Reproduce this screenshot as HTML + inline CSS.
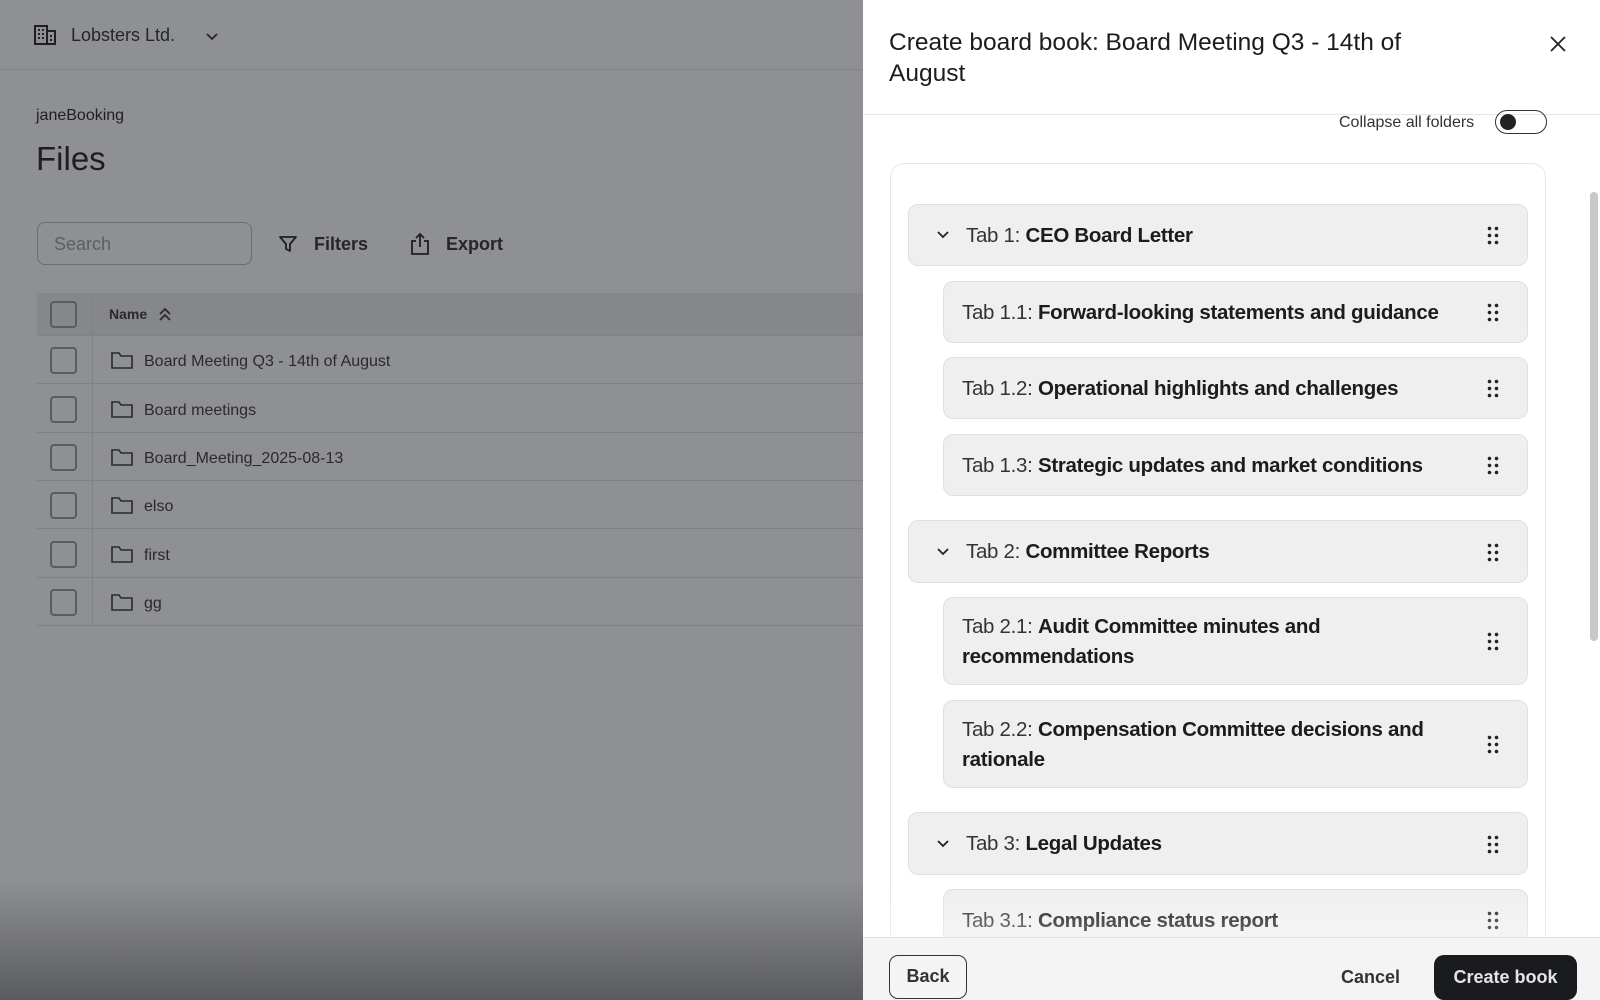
<!DOCTYPE html>
<html><head><meta charset="utf-8"><style>
*{box-sizing:border-box;margin:0;padding:0}
body{width:1600px;height:1000px;overflow:hidden;position:relative;font-family:"Liberation Sans",sans-serif;background:#8f9094;color:#1c1c1e}
.left{position:absolute;left:0;top:0;width:863px;height:1000px;background:#8f9094;color:#1f1f22}
.topbar{position:absolute;left:0;top:0;width:863px;height:70px;border-bottom:1px solid #838488}
.grad{position:absolute;left:0;top:880px;width:863px;height:120px;background:linear-gradient(#8f909400,#5a5b5e)}
.row{position:absolute;left:37px;width:826px;height:48px;border-bottom:1px solid #818286}
.cb{position:absolute;left:13px;top:11px;width:27px;height:27px;border:2px solid #5b5c60;border-radius:4px}
.rn{position:absolute;left:107px;top:17px;font-size:16px;color:#2a2a2d}
.fold{position:absolute;left:74px;top:15px}
.panel{position:absolute;left:863px;top:0;width:737px;height:1000px;background:#fff}
.item{position:absolute;background:#efeff0;border:1.5px solid #e0e0e2;border-radius:10px;font-size:20.5px;letter-spacing:-0.3px;color:#1c1c1e}
.item b{font-weight:600}
.item span{font-weight:400;color:#333}
.l1{left:45px;width:620px}
.l2{left:80px;width:585px}
.dots{position:absolute;right:27px;top:50%;margin-top:-10px;width:14px;height:21px;background:radial-gradient(circle,#222 1.6px,transparent 2px) 0 0/7px 7px}
.chev{position:absolute;left:27px;top:50%;margin-top:-5px}
</style></head><body>
<div class="left">
 <div class="topbar">
  <svg style="position:absolute;left:34px;top:25px" width="22" height="20" viewBox="0 0 22 20"><rect x="1" y="1" width="12" height="18" fill="none" stroke="#1f1f22" stroke-width="2"/><rect x="13" y="6" width="8" height="13" fill="none" stroke="#1f1f22" stroke-width="2"/><g fill="#1f1f22"><rect x="4" y="4" width="2" height="2"/><rect x="8" y="4" width="2" height="2"/><rect x="4" y="8" width="2" height="2"/><rect x="8" y="8" width="2" height="2"/><rect x="4" y="12" width="2" height="2"/><rect x="8" y="12" width="2" height="2"/><rect x="16" y="10" width="2" height="2"/><rect x="16" y="14" width="2" height="2"/></g></svg>
  <div style="position:absolute;left:71px;top:25px;font-size:18px;color:#26262a">Lobsters Ltd.</div>
  <svg style="position:absolute;left:205px;top:32px" width="14" height="9"><path d="M2 2l5 5 5-5" fill="none" stroke="#26262a" stroke-width="1.8"/></svg>
 </div>
 <div style="position:absolute;left:36px;top:107px;font-size:16px">janeBooking</div>
 <div style="position:absolute;left:36px;top:140px;font-size:33px;font-weight:500">Files</div>
 <div style="position:absolute;left:37px;top:222px;width:215px;height:43px;border:1.5px solid #6c6d71;border-radius:8px;font-size:18px;color:#5d5e62;padding:11px 16px">Search</div>
 <svg style="position:absolute;left:279px;top:235px" width="18" height="18"><path d="M1 2h16l-6 7v7l-4-2V9z" fill="none" stroke="#1f1f22" stroke-width="1.8" stroke-linejoin="round"/></svg>
 <div style="position:absolute;left:314px;top:234px;font-size:18px;font-weight:600;color:#26262a">Filters</div>
 <svg style="position:absolute;left:410px;top:232px" width="20" height="24"><path d="M6 9H2v13h16V9h-4M10 15V2M6 6l4-4 4 4" fill="none" stroke="#1f1f22" stroke-width="1.8"/></svg>
 <div style="position:absolute;left:446px;top:234px;font-size:18px;font-weight:600;color:#26262a">Export</div>
 <div style="position:absolute;left:37px;top:293px;width:826px;height:43px;background:#86878b;border-bottom:1px solid #818286"><div class="cb" style="top:8px"></div><div style="position:absolute;left:55px;top:0;width:1px;height:43px;background:#818286"></div><div style="position:absolute;left:72px;top:13px;font-size:14px;font-weight:600;color:#2a2a2d">Name</div><svg style="position:absolute;left:121px;top:13px" width="14" height="16"><path d="M2 8l5-5 5 5M2 14l5-5 5 5" fill="none" stroke="#2a2a2d" stroke-width="1.8"/></svg></div>
 <div class="row" style="top:336px"><div class="cb"></div><svg class="fold" width="22" height="18"><path d="M1 2h7l2 3h11v12H1z" fill="none" stroke="#2a2a2d" stroke-width="1.6"/></svg><div class="rn">Board Meeting Q3 - 14th of August</div></div>
 <div class="row" style="top:385px"><div class="cb"></div><svg class="fold" width="22" height="18"><path d="M1 2h7l2 3h11v12H1z" fill="none" stroke="#2a2a2d" stroke-width="1.6"/></svg><div class="rn">Board meetings</div></div>
 <div class="row" style="top:433px"><div class="cb"></div><svg class="fold" width="22" height="18"><path d="M1 2h7l2 3h11v12H1z" fill="none" stroke="#2a2a2d" stroke-width="1.6"/></svg><div class="rn">Board_Meeting_2025-08-13</div></div>
 <div class="row" style="top:481px"><div class="cb"></div><svg class="fold" width="22" height="18"><path d="M1 2h7l2 3h11v12H1z" fill="none" stroke="#2a2a2d" stroke-width="1.6"/></svg><div class="rn">elso</div></div>
 <div class="row" style="top:530px"><div class="cb"></div><svg class="fold" width="22" height="18"><path d="M1 2h7l2 3h11v12H1z" fill="none" stroke="#2a2a2d" stroke-width="1.6"/></svg><div class="rn">first</div></div>
 <div class="row" style="top:578px"><div class="cb"></div><svg class="fold" width="22" height="18"><path d="M1 2h7l2 3h11v12H1z" fill="none" stroke="#2a2a2d" stroke-width="1.6"/></svg><div class="rn">gg</div></div>
 <div style="position:absolute;left:92px;top:293px;width:1px;height:333px;background:#818286"></div>
 <div class="grad"></div>
</div>
<div class="panel">
 <div style="position:absolute;left:26px;top:27px;font-size:24.5px;line-height:31px;font-weight:500;color:#1c1c1e;width:560px">Create board book: Board Meeting Q3 - 14th of August</div>
 <svg style="position:absolute;left:686px;top:35px" width="18" height="18"><path d="M2 2l14 14M16 2L2 16" stroke="#222" stroke-width="1.8"/></svg>
 <div style="position:absolute;left:0;top:114px;width:737px;height:1px;background:#e6e6e8"></div>
 <div style="position:absolute;left:476px;top:114px;font-size:16px;color:#333">Collapse all folders</div>
 <div style="position:absolute;left:632px;top:110px;width:52px;height:24px;border:1.5px solid #333;border-radius:12px"><div style="position:absolute;left:4px;top:3px;width:16px;height:16px;border-radius:50%;background:#222"></div></div>
 <div style="position:absolute;left:27px;top:163px;width:656px;height:800px;border:1.5px solid #e6e6e8;border-radius:14px"></div>
 <div class="item l1" style="top:204px;height:62px;padding:19px 0 0 57px"><svg class="chev" width="14" height="9"><path d="M2 2l5 5 5-5" fill="none" stroke="#222" stroke-width="1.8"/></svg><span>Tab 1:</span> <b>CEO Board Letter</b><i class="dots"></i></div>
 <div class="item l2" style="top:281px;height:62px;padding:19px 0 0 18px"><span>Tab 1.1:</span> <b>Forward-looking statements and guidance</b><i class="dots"></i></div>
 <div class="item l2" style="top:357px;height:62px;padding:19px 0 0 18px"><span>Tab 1.2:</span> <b>Operational highlights and challenges</b><i class="dots"></i></div>
 <div class="item l2" style="top:434px;height:62px;padding:19px 0 0 18px"><span>Tab 1.3:</span> <b>Strategic updates and market conditions</b><i class="dots"></i></div>
 <div class="item l1" style="top:520px;height:63px;padding:19px 0 0 57px"><svg class="chev" width="14" height="9"><path d="M2 2l5 5 5-5" fill="none" stroke="#222" stroke-width="1.8"/></svg><span>Tab 2:</span> <b>Committee Reports</b><i class="dots"></i></div>
 <div class="item l2" style="top:597px;height:88px;padding:14px 90px 0 18px;line-height:30px"><span>Tab 2.1:</span> <b>Audit Committee minutes and recommendations</b><i class="dots"></i></div>
 <div class="item l2" style="top:700px;height:88px;padding:14px 80px 0 18px;line-height:30px"><span>Tab 2.2:</span> <b>Compensation Committee decisions and rationale</b><i class="dots"></i></div>
 <div class="item l1" style="top:812px;height:63px;padding:19px 0 0 57px"><svg class="chev" width="14" height="9"><path d="M2 2l5 5 5-5" fill="none" stroke="#222" stroke-width="1.8"/></svg><span>Tab 3:</span> <b>Legal Updates</b><i class="dots"></i></div>
 <div class="item l2" style="top:889px;height:62px;padding:19px 0 0 18px"><span>Tab 3.1:</span> <b>Compliance status report</b><i class="dots"></i></div>
 <div style="position:absolute;left:0;top:890px;width:737px;height:47px;background:linear-gradient(#ffffff00,#ffffff55)"></div>
 <div style="position:absolute;left:727px;top:192px;width:8px;height:449px;background:#c8c8ca;border-radius:4px"></div>
 <div style="position:absolute;left:0;top:937px;width:737px;height:63px;background:#f4f4f5;border-top:1px solid #e2e2e4"></div>
 <div style="position:absolute;left:26px;top:955px;width:78px;height:44px;border:1.5px solid #333;border-radius:9px;font-size:18px;font-weight:600;text-align:center;line-height:41px;color:#333">Back</div>
 <div style="position:absolute;left:478px;top:967px;font-size:18px;font-weight:600;color:#333">Cancel</div>
 <div style="position:absolute;left:571px;top:955px;width:143px;height:45px;background:#1a1b1f;border-radius:10px;font-size:18px;font-weight:600;text-align:center;line-height:44px;color:#e4e4e6">Create book</div>
</div>
</body></html>
